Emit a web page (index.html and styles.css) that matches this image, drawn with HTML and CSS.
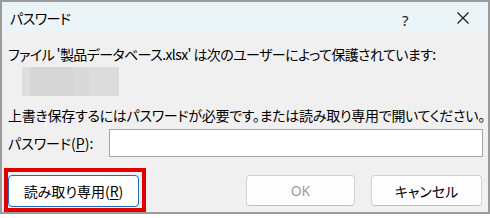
FILE: index.html
```html
<!DOCTYPE html>
<html lang="ja">
<head>
<meta charset="utf-8">
<link rel="stylesheet" href="styles.css">
</head>
<body>
<div class="window">
  <div class="titlebar">
    <span class="title">パスワード</span>
    <span class="help">?</span>
    <span class="close">
      <svg width="12" height="12" viewBox="0 0 12 12"><path d="M0.5 0.5 L11.5 11.5 M11.5 0.5 L0.5 11.5" stroke="#1a1a1a" stroke-width="1.2" fill="none"/></svg>
    </span>
  </div>
  <div class="content">
    <div class="line first">ファイル '製品データベース.xlsx' は次のユーザーによって保護されています:</div>
    <div class="user"></div>
    <div class="line second">上書き保存するにはパスワードが必要です。または読み取り専用で開いてください。</div>
    <div class="pwrow">
      <label class="pwlabel">パスワード(<u>P</u>):</label>
      <div class="input"></div>
    </div>
    <div class="buttons">
      <div class="btn readonly">読み取り専用(<u>R</u>)</div>
      <div class="spacer"></div>
      <div class="btn ok">OK</div>
      <div class="btn cancel">キャンセル</div>
    </div>
  </div>
</div>
</body>
</html>
```
FILE: styles.css
```css
html, body {
  margin: 0;
  padding: 0;
  background: #ffffff;
}
body {
  font-family: "Noto Sans CJK JP", "Noto Sans", sans-serif;
  font-feature-settings: "palt" 1;
  color: #000;
}
.window {
  width: 490px;
  height: 214px;
  box-sizing: border-box;
  border: 2px solid #9b9b9b;
  background: #f0f0f0;
  display: flex;
  flex-direction: column;
}
.titlebar {
  height: 32px;
  background: #ebf5f8;
  display: flex;
  align-items: center;
  padding-left: 8px;
}
.title {
  font-size: 14px;
  flex: 1;
  letter-spacing: -0.5px;
}
.help {
  font-family: "Noto Sans", sans-serif;
  font-size: 15px;
  color: #1a1a1a;
  width: 12px;
  margin-right: 43px;
  padding-top: 3px;
}
.close {
  display: flex;
  width: 12px;
  height: 12px;
  margin-right: 19px;
}
.content {
  padding: 0 5px 0 6px;
  display: flex;
  flex-direction: column;
}
.line {
  font-size: 14px;
  line-height: 20px;
  white-space: nowrap;
}
.first {
  margin-top: 10px;
  letter-spacing: -0.6px;
}
.user {
  width: 97px;
  height: 29px;
  margin: 3px 0 0 14px;
  background: linear-gradient(90deg, #dedede 0 8px, #d6d6d6 8px 52px, #d9d9d9 52px 68px, #dcdcdc 68px);
}
.second {
  margin-top: 9px;
  letter-spacing: -0.27px;
}
.pwrow {
  display: flex;
  align-items: center;
  margin-top: 4px;
  height: 28px;
}
.pwlabel {
  font-size: 14px;
  width: 101px;
}
.input {
  flex: 1;
  height: 28px;
  box-sizing: border-box;
  border: 1px solid #a5a5a5;
  background: #fff;
}
.buttons {
  display: flex;
  margin-top: 18px;
  align-items: flex-start;
}
.spacer { flex: 1; }
.btn {
  box-sizing: border-box;
  height: 31px;
  border: 1px solid #d2d2d2;
  border-bottom-color: #c0c0c0;
  border-radius: 4px;
  background: #fdfdfd;
  display: flex;
  align-items: center;
  justify-content: center;
  font-size: 14px;
}
.readonly {
  width: 131px;
  height: 32px;
  border: 1px solid #1a6fc2;
  position: relative;
}
.readonly::after {
  content: "";
  position: absolute;
  left: -5px;
  top: -8px;
  right: -8px;
  bottom: -6px;
  border: 4px solid #e00000;
}
.ok {
  width: 109px;
  color: #9d9d9d;
  font-family: "Noto Sans", sans-serif;
  margin-right: 16px;
}
.cancel {
  width: 111px;
  margin-right: 1px;
}
u {
  text-underline-offset: 2px;
}
```
